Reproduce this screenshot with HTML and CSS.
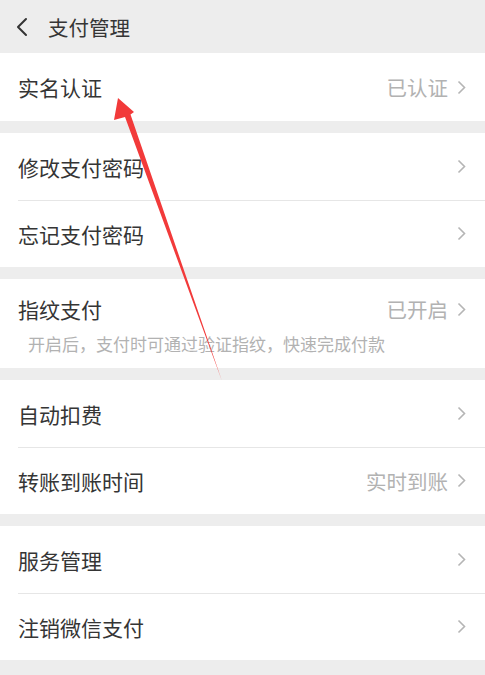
FILE: index.html
```html
<!DOCTYPE html>
<html lang="zh-CN">
<head>
<meta charset="utf-8">
<title>支付管理</title>
<link rel="stylesheet" href="styles.css">
</head>
<body>
<div class="page">
  <header class="nav">
    <svg class="back" width="14" height="20" viewBox="0 0 14 20"><path d="M11 2 L3 10 L11 18" fill="none" stroke="#333" stroke-width="2" stroke-linecap="round" stroke-linejoin="round"/></svg>
    <span class="nav-title">支付管理</span>
  </header>

  <section class="group first">
    <div class="row"><span class="label">实名认证</span><span class="value">已认证</span><svg class="chev" width="9" height="15" viewBox="0 0 9 15"><path d="M1.5 1.5 L7.5 7.5 L1.5 13.5" fill="none" stroke="#b5b5b5" stroke-width="1.6"/></svg></div>
  </section>

  <section class="group">
    <div class="row"><span class="label">修改支付密码</span><svg class="chev" width="9" height="15" viewBox="0 0 9 15"><path d="M1.5 1.5 L7.5 7.5 L1.5 13.5" fill="none" stroke="#b5b5b5" stroke-width="1.6"/></svg></div>
    <div class="row"><span class="label">忘记支付密码</span><svg class="chev" width="9" height="15" viewBox="0 0 9 15"><path d="M1.5 1.5 L7.5 7.5 L1.5 13.5" fill="none" stroke="#b5b5b5" stroke-width="1.6"/></svg></div>
  </section>

  <section class="group">
    <div class="finger">
      <div class="finger-top"><span class="label">指纹支付</span><span class="value">已开启</span><svg class="chev" width="9" height="15" viewBox="0 0 9 15"><path d="M1.5 1.5 L7.5 7.5 L1.5 13.5" fill="none" stroke="#b5b5b5" stroke-width="1.6"/></svg></div>
      <div class="hint">开启后，支付时可通过验证指纹，快速完成付款</div>
    </div>
  </section>

  <section class="group">
    <div class="row"><span class="label">自动扣费</span><svg class="chev" width="9" height="15" viewBox="0 0 9 15"><path d="M1.5 1.5 L7.5 7.5 L1.5 13.5" fill="none" stroke="#b5b5b5" stroke-width="1.6"/></svg></div>
    <div class="row"><span class="label">转账到账时间</span><span class="value">实时到账</span><svg class="chev" width="9" height="15" viewBox="0 0 9 15"><path d="M1.5 1.5 L7.5 7.5 L1.5 13.5" fill="none" stroke="#b5b5b5" stroke-width="1.6"/></svg></div>
  </section>

  <section class="group">
    <div class="row"><span class="label">服务管理</span><svg class="chev" width="9" height="15" viewBox="0 0 9 15"><path d="M1.5 1.5 L7.5 7.5 L1.5 13.5" fill="none" stroke="#b5b5b5" stroke-width="1.6"/></svg></div>
    <div class="row"><span class="label">注销微信支付</span><svg class="chev" width="9" height="15" viewBox="0 0 9 15"><path d="M1.5 1.5 L7.5 7.5 L1.5 13.5" fill="none" stroke="#b5b5b5" stroke-width="1.6"/></svg></div>
  </section>

  <svg class="arrow" width="485" height="675" viewBox="0 0 485 675">
    <polygon points="118,98 134,112 130.5,114.5 222,381 125,117 114,120" fill="#f23a3a"/>
  </svg>
</div>
</body>
</html>
```
FILE: styles.css
```css
* { box-sizing: border-box; }
html, body { margin: 0; padding: 0; }
body {
  background: #ededed;
  font-family: "Noto Sans CJK SC", "Noto Sans", sans-serif;
  color: #353535;
}
.page {
  position: relative;
  width: 485px;
  height: 675px;
  overflow: hidden;
  background: #ededed;
}
.nav {
  height: 53px;
  display: flex;
  align-items: center;
  padding-left: 15px;
  gap: 19px;
}
.back { display: block; }
.nav-title {
  font-size: 20.5px;
  line-height: 28px;
  color: #353535;
}
.group {
  background: #fff;
  margin-top: 12px;
}
.group.first { margin-top: 0; }
.group.first .row { height: 68px; }
.row {
  height: 67px;
  display: flex;
  align-items: center;
  padding-left: 18px;
  padding-right: 19px;
  position: relative;
}
.row + .row::before {
  content: "";
  position: absolute;
  left: 18px;
  right: 0;
  top: 0;
  height: 1px;
  background: #e6e6e6;
}
.label {
  font-size: 21px;
  line-height: 28px;
  flex: 1;
}
.value {
  font-size: 20.5px;
  line-height: 28px;
  color: #b2b2b2;
  margin-right: 9px;
}
.chev { display: block; }
.finger {
  height: 89px;
  padding-top: 16px;
}
.finger-top {
  display: flex;
  align-items: center;
  padding-left: 18px;
  padding-right: 19px;
  height: 28px;
}
.hint {
  margin-top: 9px;
  padding-left: 28px;
  font-size: 17px;
  line-height: 24px;
  color: #b2b2b2;
}
.arrow {
  position: absolute;
  left: 0;
  top: 0;
  pointer-events: none;
}
```
